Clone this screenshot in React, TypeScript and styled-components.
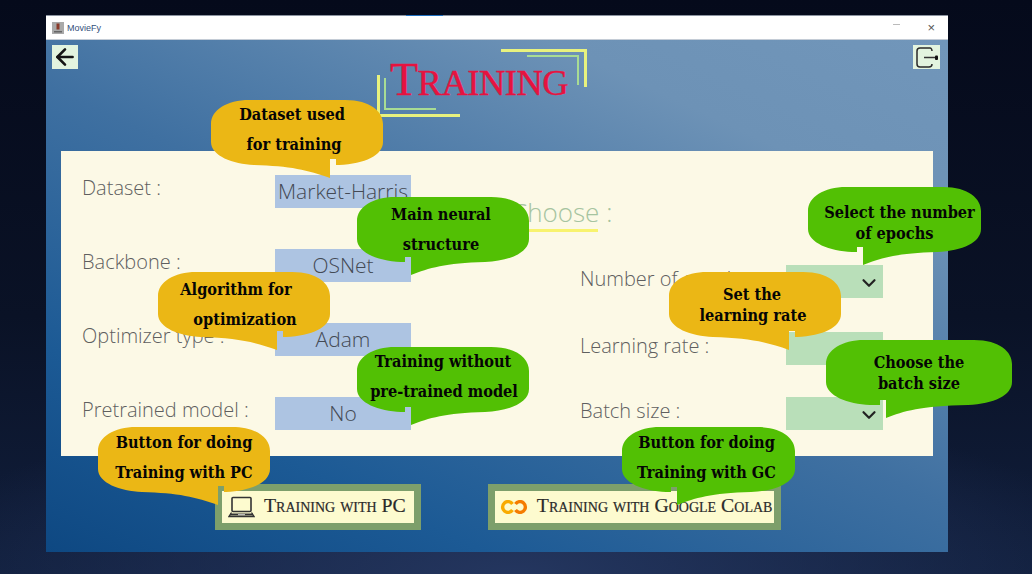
import React from "react";
import styled, { createGlobalStyle } from "styled-components";
import { ArrowLeft, ChevronDown } from "lucide-react";

const GlobalStyle = createGlobalStyle`
  html, body {
    margin: 0;
    padding: 0;
    background: #060b1c;
  }
`;

const bubbleColors = { yellow: "#ebb715", green: "#52c004" };

// body is always 65px tall, the tail hangs 13px under it
function bubblePath(w: number, tail: number, tone: "yellow" | "green") {
  const start = `M38 0 H${w - 38} C${w - 12} 0 ${w} 12 ${w} 24 V42 C${w} 55 ${w - 18} 64 ${w - 44} 65`;
  const end = `C22 64 0 56 0 42 V24 C0 10 16 0 38 0 Z`;
  if (tone === "yellow") {
    return `${start} L${tail + 6} 65 V59 H${tail} V78 C${tail - 22} 70 ${tail - 40} 66 ${tail - 76} 65 ${end}`;
  }
  return `${start} C${tail + 34} 66 ${tail + 18} 71 ${tail} 78 V60 H${tail - 6} V65 L44 65 ${end}`;
}

type BubbleProps = {
  x: number;
  y: number;
  w: number;
  tail: number;
  tone: "yellow" | "green";
  tight?: boolean;
  dy?: number;
  lines: [string, number][];
};

function Bubble({ x, y, w, tail, tone, tight, dy = 0, lines }: BubbleProps) {
  return (
    <BubbleBox $x={x} $y={y} $w={w}>
      <BubbleShape width={w} height={78} viewBox={`0 0 ${w} 78`}>
        <path d={bubblePath(w, tail, tone)} fill={bubbleColors[tone]} />
      </BubbleShape>
      <BubbleText $tight={tight} $dy={dy}>
        {lines.map(([text, dx]) => (
          <BubbleLine key={text} $dx={dx}>
            {text}
          </BubbleLine>
        ))}
      </BubbleText>
    </BubbleBox>
  );
}

function Field({ label, value, green }: { label: string; value?: string; green?: boolean }) {
  return (
    <FieldRow>
      <FieldLabel $green={green}>{label}</FieldLabel>
      <FieldValue $green={green}>
        {value}
        {green && (
          <ChevronSlot>
            <ChevronDown size={22} strokeWidth={2.4} color="#222" />
          </ChevronSlot>
        )}
      </FieldValue>
    </FieldRow>
  );
}

function App() {
  return (
    <Page>
      <GlobalStyle />
      <Window>
        <TitleBar>
          <AppIcon>
            <svg width="12" height="12" viewBox="0 0 12 12">
              <rect width="12" height="12" fill="#a9a9a9" />
              <rect x="4.5" y="1.5" width="3" height="6" fill="#8a3a2a" />
              <rect x="2" y="9" width="8" height="1.5" fill="#666" />
            </svg>
          </AppIcon>
          <AppName>MovieFy</AppName>
          <WinControls>
            <Minimize />
            <CloseMark>×</CloseMark>
          </WinControls>
        </TitleBar>
        <Content>
          <Header>
            <IconButton>
              <ArrowLeft size={26} strokeWidth={2.4} color="#151515" />
            </IconButton>
            <TitleBlock>
              <TitleFrame width="210" height="68" viewBox="0 0 210 68">
                <path d="M124 1.500 H208.500 V38" fill="none" stroke="#e8f27e" strokeWidth="3" />
                <path d="M150 7 H201 V36" fill="none" stroke="#a8dc94" strokeWidth="2" />
                <path d="M1.500 26 V66.500 H83" fill="none" stroke="#e8f27e" strokeWidth="3" />
                <path d="M8 29 V60 H59" fill="none" stroke="#a8dc94" strokeWidth="2" />
              </TitleFrame>
              <Title>Training</Title>
            </TitleBlock>
            <ExitButton>
              <svg width="24" height="23" viewBox="0 0 24 23" fill="none">
                <path d="M15 2 H5 C3 2 2 3 2 5 V18 C2 20 3 21 5 21 H14 C16 21 17 20 17 18 M17 5 C17 3.500 16 2 15 2" stroke="#2a2a2a" strokeWidth="1.500" />
                <path d="M9 11.500 H21" stroke="#333" strokeWidth="1.500" />
                <rect x="20" y="9.500" width="3" height="4.500" rx="1" fill="#111" />
              </svg>
            </ExitButton>
          </Header>
          <Panel>
            <LeftColumn>
              <Field label="Dataset :" value="Market-Harris" />
              <Field label="Backbone :" value="OSNet" />
              <Field label="Optimizer type :" value="Adam" />
              <Field label="Pretrained model :" value="No" />
            </LeftColumn>
            <RightColumn>
              <ChooseHeading>Choose :</ChooseHeading>
              <RightRows>
                <Field green label="Number of epochs :" />
                <Field green label="Learning rate :" />
                <Field green label="Batch size :" />
              </RightRows>
            </RightColumn>
          </Panel>
          <ButtonRow>
            <TrainButton>
              <svg width="27" height="22" viewBox="0 0 27 22" fill="none">
                <rect x="4" y="1.500" width="19" height="14" rx="1" stroke="#333" strokeWidth="1.600" />
                <path d="M3.500 16.500 L1 20.500 H26 L23.500 16.500" stroke="#333" strokeWidth="1.300" />
                <rect x="2" y="17.500" width="23" height="2" fill="#333" />
                <rect x="10" y="18" width="7" height="1.200" fill="#bbb" />
              </svg>
              <ButtonLabel>Training with PC</ButtonLabel>
            </TrainButton>
            <TrainButton $wide>
              <svg width="28" height="14" viewBox="0 0 28 14" fill="none">
                <path d="M12.500 4 A5.400 5.400 0 1 0 12.500 10" stroke="#f9ab00" strokeWidth="3.400" />
                <path d="M15.500 4 A5.400 5.400 0 1 1 15.500 10" stroke="#f57c00" strokeWidth="3.400" />
              </svg>
              <ButtonLabel>Training with Google Colab</ButtonLabel>
            </TrainButton>
          </ButtonRow>
        </Content>
      </Window>

      <Bubble x={211} y={100} w={172} tail={119} tone="yellow" dy={-3} lines={[["Dataset used", -5], ["for training", -3]]} />
      <Bubble x={357} y={197} w={172} tail={54} tone="green" lines={[["Main neural", -2], ["structure", -2]]} />
      <Bubble x={158} y={272} w={172} tail={119} tone="yellow" lines={[["Algorithm for", -8], ["optimization", 1]]} />
      <Bubble x={357} y={347} w={172} tail={54} tone="green" dy={-3} lines={[["Training without", 0], ["pre-trained model", 1]]} />
      <Bubble x={98} y={427} w={172} tail={120} tone="yellow" dy={-2} lines={[["Button for doing", 0], ["Training with PC", 0]]} />
      <Bubble x={622} y={427} w={173} tail={55} tone="green" dy={-2} lines={[["Button for doing", -2], ["Training with GC", -2]]} />
      <Bubble x={808} y={187} w={173} tail={55} tone="green" tight dy={3} lines={[["Select the number", 5], ["of epochs", 0]]} />
      <Bubble x={669} y={272} w={172} tail={120} tone="yellow" tight lines={[["Set the", -3], ["learning rate", -2]]} />
      <Bubble x={826} y={340} w={186} tail={60} tone="green" tight lines={[["Choose the", 0], ["batch size", 0]]} />
    </Page>
  );
}

const Page = styled.div`
  position: relative;
  width: 1032px;
  height: 574px;
  overflow: hidden;
  box-sizing: border-box;
  padding: 15px 84px 22px 46px;
  background:
    radial-gradient(ellipse 620px 180px at 50% 100%, #24365f 0%, rgba(36, 54, 95, 0) 100%),
    linear-gradient(180deg, #050a1b 0%, #0a1226 55%, #111f3d 100%);
`;

const Window = styled.div`
  display: flex;
  flex-direction: column;
  height: 537px;
`;

const TitleBar = styled.div`
  position: relative;
  display: flex;
  align-items: center;
  gap: 3px;
  flex: 0 0 25px;
  padding: 0 13px 0 6px;
  background: #fff;
  border-top: 1px solid #8b93a0;
  border-bottom: 1px solid #c4ccd6;
  box-sizing: border-box;

  &::before {
    content: "";
    position: absolute;
    left: 360px;
    top: -1px;
    width: 37px;
    height: 1px;
    background: #1f6fc0;
  }
`;

const AppIcon = styled.div`
  display: flex;
  width: 12px;
  height: 12px;
`;

const AppName = styled.span`
  font: 9px "Liberation Sans", sans-serif;
  color: #33507a;
`;

const WinControls = styled.div`
  display: flex;
  align-items: center;
  gap: 27px;
  margin-left: auto;
`;

const Minimize = styled.div`
  width: 7px;
  height: 1px;
  margin-bottom: 6px;
  background: #bbb;
`;

const CloseMark = styled.span`
  font: 13px/13px "Liberation Sans", sans-serif;
  color: #555;
`;

const Content = styled.div`
  display: flex;
  flex-direction: column;
  flex: 1;
  background: linear-gradient(25deg, #0e4882 0%, #1c5a95 22%, #3f70a1 50%, #6d92b6 80%, #7196ba 100%);
`;

const Header = styled.div`
  display: flex;
  align-items: flex-start;
  flex: 0 0 111px;
  box-sizing: border-box;
  padding: 5px 8px 0 6px;
`;

const IconButton = styled.div`
  display: flex;
  align-items: center;
  justify-content: center;
  width: 26px;
  height: 24px;
  background: #e3f4df;
`;

const ExitButton = styled(IconButton)`
  width: 27px;
  margin-left: auto;
`;

const TitleBlock = styled.div`
  position: relative;
  box-sizing: border-box;
  width: 210px;
  height: 68px;
  margin: 4px 0 0 299px;
  padding: 4px 0 0 13px;
`;

const TitleFrame = styled.svg`
  position: absolute;
  left: 0;
  top: 0;
`;

const Title = styled.div`
  font: 36.500px/54px "Liberation Serif", serif;
  text-transform: uppercase;
  color: #e6133f;
  -webkit-text-stroke: 0.4px #e6133f;
  white-space: nowrap;
  letter-spacing: -0.5px;

  &::first-letter {
    font-size: 46px;
  }
`;

const Panel = styled.div`
  display: grid;
  grid-template-columns: 436px 1fr;
  flex: 0 0 305px;
  margin: 0 15px;
  background: #fcf9e6;
`;

const LeftColumn = styled.div`
  display: flex;
  flex-direction: column;
  gap: 41px;
  padding: 24px 0 0 21px;
`;

const RightColumn = styled.div`
  display: flex;
  flex-direction: column;
  padding-left: 83px;
`;

const RightRows = styled.div`
  display: flex;
  flex-direction: column;
  gap: 33px;
  margin-top: 33px;

  & > :nth-child(2) {
    margin: 1px 0 -1px;
  }
`;

const ChooseHeading = styled.div`
  align-self: flex-start;
  margin: 44px 0 0 -69px;
  padding: 0 0 3px 0;
  font: 300 26px/34px "Open Sans", sans-serif;
  color: #a6c4a0;
  background: linear-gradient(#f8f36e, #f8f36e) no-repeat 0 100% / 87px 3px;
`;

const FieldRow = styled.div`
  display: flex;
  align-items: center;
  height: 33px;
`;

const FieldLabel = styled.div<{ $green?: boolean }>`
  width: ${(p) => (p.$green ? 206 : 193)}px;
  flex: none;
  margin-top: ${(p) => (p.$green ? -5 : -7)}px;
  font: 300 20px/26px "Open Sans", sans-serif;
  color: #5f5f5f;
  white-space: nowrap;
  overflow: hidden;
`;

const FieldValue = styled.div<{ $green?: boolean }>`
  display: flex;
  align-items: center;
  justify-content: center;
  position: relative;
  width: ${(p) => (p.$green ? 97 : 136)}px;
  height: 33px;
  background: ${(p) => (p.$green ? "#b9dfb9" : "#adc4e2")};
  font: 300 21px/33px "Open Sans", sans-serif;
  color: #444a54;
  white-space: nowrap;
`;

const ChevronSlot = styled.div`
  display: flex;
  position: absolute;
  right: 3px;
  top: 7px;
`;

const ButtonRow = styled.div`
  display: flex;
  gap: 67px;
  margin: 28px 0 0 169px;
`;

const TrainButton = styled.div<{ $wide?: boolean }>`
  display: flex;
  align-items: center;
  gap: 9px;
  box-sizing: border-box;
  height: 46px;
  padding: 0 ${(p) => (p.$wide ? 2 : 8)}px 0 ${(p) => (p.$wide ? 5 : 6)}px;
  border: 7px solid #7d9f6b;
  background: #fdfbcf;
`;

const ButtonLabel = styled.span`
  margin-bottom: 3px;
  font: 19.800px/1 "Liberation Serif", serif;
  font-variant: small-caps;
  color: #2a2a2a;
  -webkit-text-stroke: 0.2px #2a2a2a;
  white-space: nowrap;
`;

const BubbleBox = styled.div<{ $x: number; $y: number; $w: number }>`
  position: absolute;
  left: ${(p) => p.$x}px;
  top: ${(p) => p.$y}px;
  width: ${(p) => p.$w}px;
  height: 65px;
`;

const BubbleShape = styled.svg`
  position: absolute;
  left: 0;
  top: 0;
  overflow: visible;
`;

const BubbleText = styled.div<{ $tight?: boolean; $dy: number }>`
  position: relative;
  top: ${(p) => p.$dy}px;
  display: flex;
  flex-direction: column;
  justify-content: center;
  height: 65px;
  text-align: center;
  font: 700 16.2px/${(p) => (p.$tight ? 21 : 30)}px "DejaVu Serif", serif;
  font-stretch: condensed;
  color: #050505;
  white-space: nowrap;
`;

const BubbleLine = styled.div<{ $dx: number }>`
  transform: translateX(${(p) => p.$dx}px);
`;

export default App;
